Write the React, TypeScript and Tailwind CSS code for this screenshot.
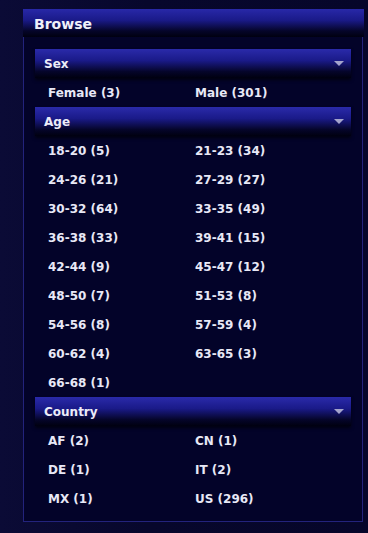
import React from "react";

const Arrow = () => (
  <svg width="10" height="5" viewBox="0 0 10 5" className="mr-[7px]">
    <polygon points="0,0 10,0 5,5" fill="#a4a4cc" />
  </svg>
);

const SectionHeader = ({ title }: { title: string }) => (
  <div className="flex h-[29px] items-center justify-between bg-[linear-gradient(to_bottom,#2a2aaa_0%,#1a1a88_40%,#05052a_78%,#000010_100%)] pl-[9px] shadow-[0_2px_3px_rgba(0,0,0,0.6)]">
    <span className="text-[12px] font-bold text-[#ececf8]">{title}</span>
    <Arrow />
  </div>
);

const Items = ({ items }: { items: string[] }) => (
  <div className="grid grid-cols-[147px_1fr] pl-[13px]">
    {items.map((t) => (
      <div key={t} className="flex h-[29px] items-center pt-[1px] text-[12px] font-bold text-[#e8e8f6]">
        {t}
      </div>
    ))}
  </div>
);

export default function App() {
  return (
    <div
      className="h-[533px] w-[368px] bg-[linear-gradient(to_right,#0b0b36,#07072c_40%,#06062a)] pt-[9px] pl-[23px] pr-[4px]"
      style={{ fontFamily: '"DejaVu Sans", Verdana, sans-serif' }}
    >
      <div className="flex h-[28px] items-center bg-[linear-gradient(to_bottom,#2828a8_0%,#1a1a88_40%,#05052a_78%,#000010_100%)] pl-[11px] pt-[2px]">
        <span className="text-[14px] font-bold text-[#f0f0fa]">Browse</span>
      </div>
      <div className="mr-[1px] flex h-[485px] flex-col border border-t-0 border-[#23237c] bg-[#030329] px-[11px] pt-[12px]">
        <SectionHeader title="Sex" />
        <Items items={["Female (3)", "Male (301)"]} />
        <SectionHeader title="Age" />
        <Items
          items={[
            "18-20 (5)",
            "21-23 (34)",
            "24-26 (21)",
            "27-29 (27)",
            "30-32 (64)",
            "33-35 (49)",
            "36-38 (33)",
            "39-41 (15)",
            "42-44 (9)",
            "45-47 (12)",
            "48-50 (7)",
            "51-53 (8)",
            "54-56 (8)",
            "57-59 (4)",
            "60-62 (4)",
            "63-65 (3)",
            "66-68 (1)",
          ]}
        />
        <SectionHeader title="Country" />
        <Items items={["AF (2)", "CN (1)", "DE (1)", "IT (2)", "MX (1)", "US (296)"]} />
      </div>
    </div>
  );
}
